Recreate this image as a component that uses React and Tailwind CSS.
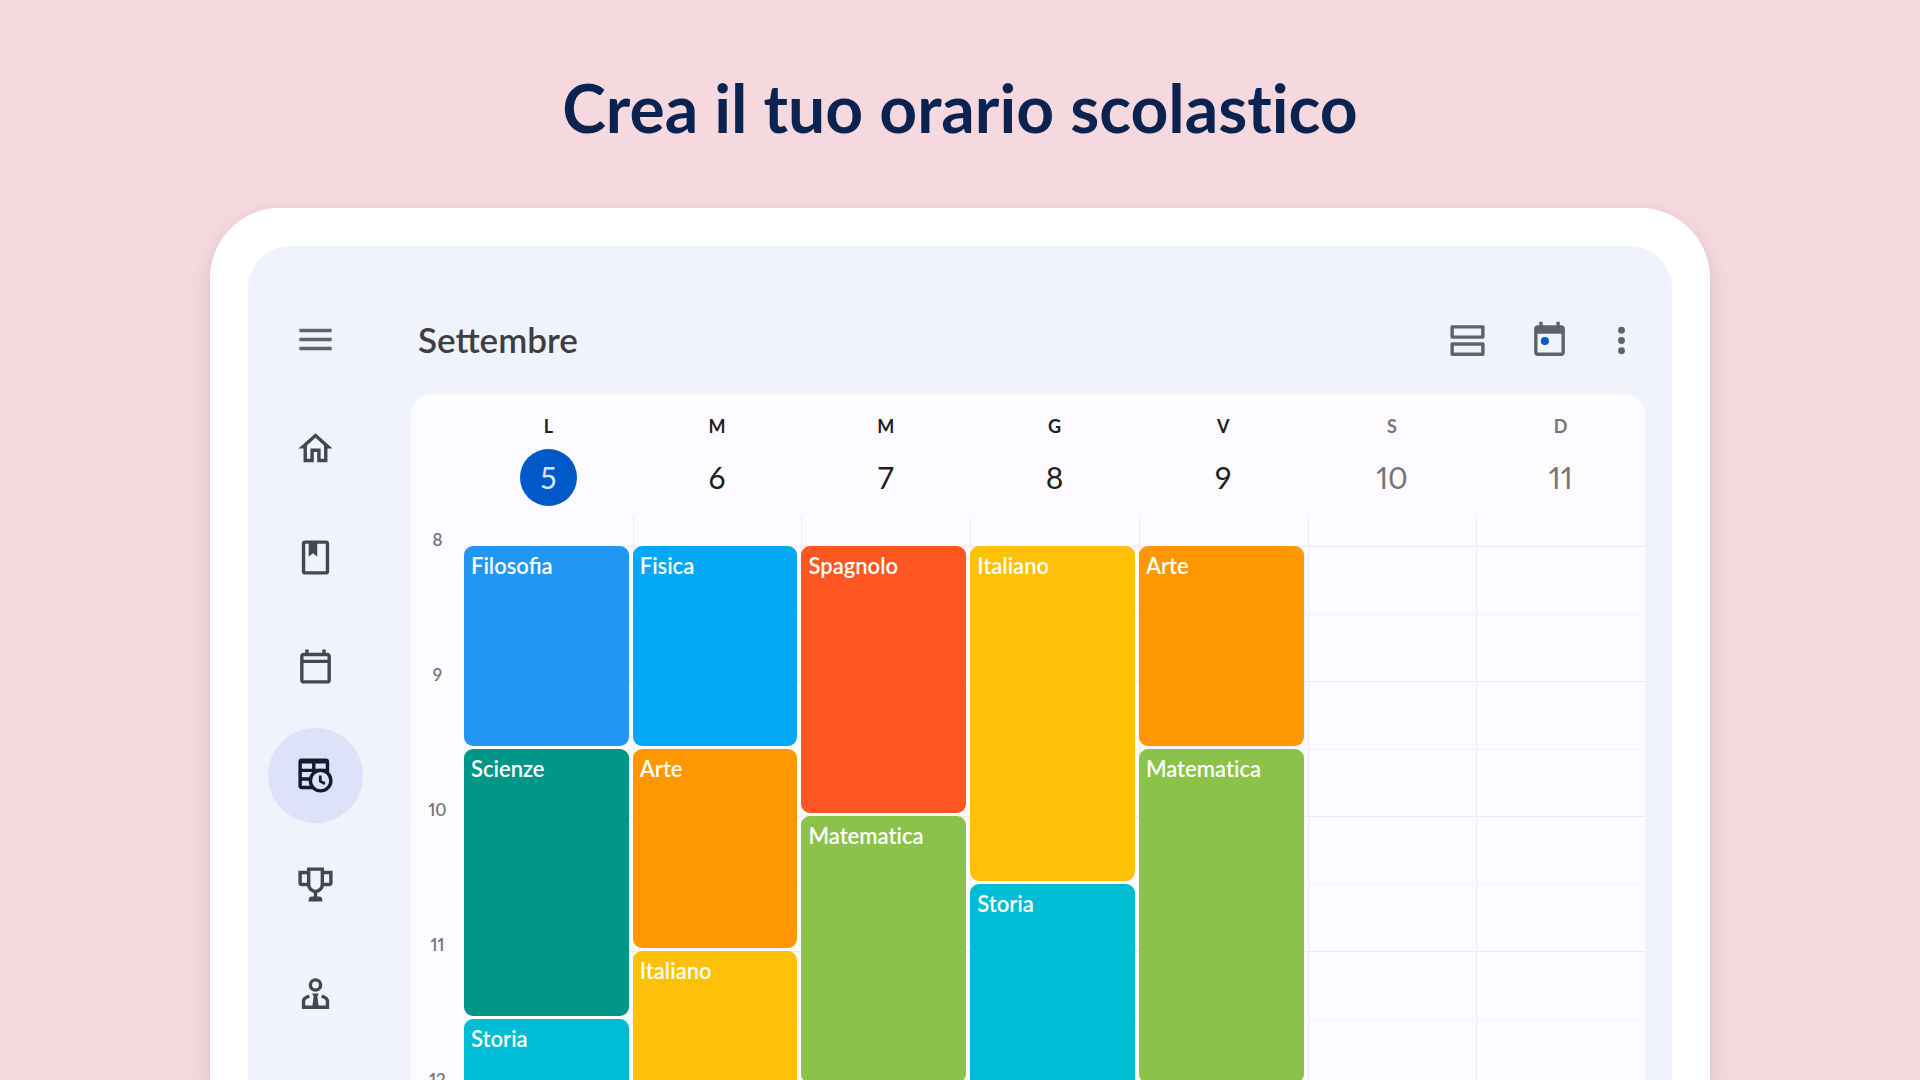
import clsx from "clsx";

const DAYS = [
  {
    letter: "L",
    number: 5,
    name: "Lunedì",
    today: true,
    lessons: [
      { subject: "Filosofia", start: 8, end: 9.5, color: "bg-[#2196f3]" },
      { subject: "Scienze", start: 9.5, end: 11.5, color: "bg-[#009688]" },
      { subject: "Storia", start: 11.5, end: 13, color: "bg-[#00bcd4]" },
    ],
  },
  {
    letter: "M",
    number: 6,
    name: "Martedì",
    lessons: [
      { subject: "Fisica", start: 8, end: 9.5, color: "bg-[#03a9f4]" },
      { subject: "Arte", start: 9.5, end: 11, color: "bg-[#ff9800]" },
      { subject: "Italiano", start: 11, end: 13, color: "bg-[#ffc107]" },
    ],
  },
  {
    letter: "M",
    number: 7,
    name: "Mercoledì",
    lessons: [
      { subject: "Spagnolo", start: 8, end: 10, color: "bg-[#ff5722]" },
      { subject: "Matematica", start: 10, end: 12, color: "bg-[#8bc34a]" },
    ],
  },
  {
    letter: "G",
    number: 8,
    name: "Giovedì",
    lessons: [
      { subject: "Italiano", start: 8, end: 10.5, color: "bg-[#ffc107]" },
      { subject: "Storia", start: 10.5, end: 13, color: "bg-[#00bcd4]" },
    ],
  },
  {
    letter: "V",
    number: 9,
    name: "Venerdì",
    lessons: [
      { subject: "Arte", start: 8, end: 9.5, color: "bg-[#ff9800]" },
      { subject: "Matematica", start: 9.5, end: 12, color: "bg-[#8bc34a]" },
    ],
  },
  { letter: "S", number: 10, name: "Sabato", weekend: true, lessons: [] },
  { letter: "D", number: 11, name: "Domenica", weekend: true, lessons: [] },
];

const FIRST_HOUR = 8;
const HOURS = [8, 9, 10, 11, 12];

// Row 1 of the day grid is the strip above the first hour, then two rows per hour
const rowOf = (hour) => (hour - FIRST_HOUR) * 2 + 2;

function Icon({ className = "size-[41px]", children }) {
  return (
    <svg viewBox="0 0 24 24" fill="currentColor" aria-hidden="true" className={className}>
      {children}
    </svg>
  );
}

function MenuIcon() {
  return (
    <Icon className="size-[43px]">
      <path d="M3 18h18v-2H3v2zm0-5h18v-2H3v2zm0-7v2h18V6H3z" />
    </Icon>
  );
}

function HomeIcon() {
  return (
    <Icon>
      <path d="M12 5.69l5 4.5V18h-2v-6H9v6H7v-7.81l5-4.5M12 3L2 12h3v8h6v-6h2v6h6v-8h3L12 3z" />
    </Icon>
  );
}

function BookIcon() {
  return (
    <Icon>
      <rect x="5" y="3" width="14" height="18" rx="1" fill="none" stroke="currentColor" strokeWidth="2" />
      <path d="M8 3h5v8.6l-2.5-2.1L8 11.6z" />
    </Icon>
  );
}

function CalendarIcon() {
  return (
    <Icon>
      <path d="M19 4h-1V2h-2v2H8V2H6v2H5c-1.1 0-2 .9-2 2v14c0 1.1.9 2 2 2h14c1.1 0 2-.9 2-2V6c0-1.1-.9-2-2-2zm0 16H5V10h14v10zm0-12H5V6h14v2z" />
    </Icon>
  );
}

function TimetableIcon() {
  return (
    <Icon>
      <path
        fillRule="evenodd"
        d="M4 2h14a2 2 0 0 1 2 2v14a2 2 0 0 1-2 2H4a2 2 0 0 1-2-2V4a2 2 0 0 1 2-2zM4 5v3h6V5zM12 5v3h6V5zM4 10v3h6v-3zM12 10v3h6v-3zM4 15v3h6v-3zM12 15v3h6v-3z"
      />
      <circle cx="15" cy="15" r="6" fill="#dde1f9" stroke="currentColor" strokeWidth="2" />
      <path d="M14.8 12v3.3l2.7 1.5" fill="none" stroke="currentColor" strokeWidth="1.6" />
    </Icon>
  );
}

function TrophyIcon() {
  return (
    <Icon>
      <path
        d="M8 3h8v9a4 4 0 0 1-8 0zM8 5H3v6a1 1 0 0 0 1 1h4M16 5h5v6a1 1 0 0 1-1 1h-4"
        fill="none"
        stroke="currentColor"
        strokeWidth="2"
      />
      <path d="M11 16h2v3h1a2 2 0 0 1 2 2v1H8v-1a2 2 0 0 1 2-2h1z" />
    </Icon>
  );
}

function TeacherIcon() {
  return (
    <Icon>
      <path
        d="M8.4 13.6C6.2 14.3 5 15.3 5 16.4V20h14v-3.6c0-1.1-1.2-2.1-3.4-2.8"
        fill="none"
        stroke="currentColor"
        strokeWidth="2"
      />
      <circle cx="12" cy="7" r="3" fill="none" stroke="currentColor" strokeWidth="2" />
      <path d="M10.1 12h3.8l-.8 1.8.8 6.2h-3.8l.8-6.2z" />
    </Icon>
  );
}

function AgendaIcon() {
  return (
    <Icon>
      <path
        d="M3 4h18v6H3zM3 14h18v6H3z"
        fill="none"
        stroke="currentColor"
        strokeWidth="2"
        strokeLinejoin="round"
      />
    </Icon>
  );
}

function TodayIcon() {
  return (
    <Icon>
      <path d="M19 3h-1V1h-2v2H8V1H6v2H5c-1.1 0-2 .9-2 2v14c0 1.1.9 2 2 2h14c1.1 0 2-.9 2-2V5c0-1.1-.9-2-2-2zm0 16H5V8h14v11z" />
      <circle cx="9.3" cy="12.3" r="2.4" fill="#0059c9" />
    </Icon>
  );
}

function MoreIcon() {
  return (
    <Icon>
      <circle cx="12" cy="6" r="2" />
      <circle cx="12" cy="12" r="2" />
      <circle cx="12" cy="18" r="2" />
    </Icon>
  );
}

const NAV = [
  { label: "Home", icon: HomeIcon },
  { label: "Materie", icon: BookIcon },
  { label: "Calendario", icon: CalendarIcon },
  { label: "Orario", icon: TimetableIcon, active: true },
  { label: "Voti", icon: TrophyIcon },
  { label: "Insegnanti", icon: TeacherIcon },
];

function Sidebar() {
  return (
    <nav className="flex shrink-0 flex-col gap-3.5 pt-[46px] pr-12 pl-5 text-[#44474f]">
      <button
        type="button"
        aria-label="Menu"
        className="flex size-[95px] items-center justify-center rounded-full text-[#5f6368]"
      >
        <MenuIcon />
      </button>
      {NAV.map(({ label, icon: NavIcon, active }) => (
        <a
          key={label}
          href="#"
          aria-label={label}
          aria-current={active ? "page" : undefined}
          className={clsx(
            "flex size-[95px] items-center justify-center rounded-full",
            active && "bg-[#dde1f9] text-[#131b2c]"
          )}
        >
          <NavIcon />
        </a>
      ))}
    </nav>
  );
}

function TopBar() {
  return (
    <header className="flex h-[148px] shrink-0 items-center justify-between pt-10 pr-[3px] pl-[7px]">
      <h2 className="pb-0.5 text-[35px] leading-10 font-semibold text-[#3c4043]">Settembre</h2>
      <div className="flex items-center text-[#5f6368]">
        <button type="button" aria-label="Agenda" className="mr-[41px]">
          <AgendaIcon />
        </button>
        <button type="button" aria-label="Oggi" className="mr-[31px]">
          <TodayIcon />
        </button>
        <button type="button" aria-label="Altro">
          <MoreIcon />
        </button>
      </div>
    </header>
  );
}

function DayHeader({ day }) {
  return (
    <div
      className={clsx(
        "flex flex-1 flex-col items-center pt-5 pb-[11px]",
        day.weekend ? "text-[#757575]" : "text-[#1f1f1f]"
      )}
    >
      <span className="text-lg leading-6 font-bold">{day.letter}</span>
      <span
        className={clsx(
          "mt-[11px] flex size-[57px] items-center justify-center rounded-full pb-0.5 text-[30px] leading-8 proportional-nums",
          day.today && "bg-[#0059c9] text-[#dbe6fb]"
        )}
      >
        {day.number}
      </span>
    </div>
  );
}

function DayColumn({ day, first }) {
  return (
    <div
      role="group"
      aria-label={day.name}
      className="grid flex-1 grid-cols-1 grid-rows-[29px_repeat(5,68px_67px)]"
    >
      <div className={clsx("col-start-1 row-start-1", !first && "border-l border-[#ecebf1]")} />
      {HOURS.flatMap((hour) => [hour, hour + 0.5]).map((slot) => (
        <div
          key={slot}
          className={clsx(
            "col-start-1 border-t",
            !first && "border-l border-l-[#ecebf1]",
            slot % 1 ? "border-t-[#f5f3f9]" : "border-t-[#ebe9f0]"
          )}
          style={{ gridRow: rowOf(slot) }}
        />
      ))}
      {day.lessons.map((lesson) => (
        <div
          key={lesson.start}
          className={clsx(
            "col-start-1 mr-1 mb-[3px] rounded-[9px] px-[7px] pt-2 text-[22px] leading-6 font-semibold text-white",
            lesson.color
          )}
          style={{ gridRow: `${rowOf(lesson.start)} / ${rowOf(lesson.end)}` }}
        >
          <span className={lesson.subject === "Filosofia" ? "" : "[font-variant-ligatures:none]"}>
            {lesson.subject}
          </span>
        </div>
      ))}
    </div>
  );
}

function WeekCard() {
  return (
    <section className="min-h-0 flex-1 overflow-hidden rounded-t-[20px] bg-[#fdfbff]">
      <div className="flex pl-[53px]">
        {DAYS.map((day) => (
          <DayHeader key={day.number} day={day} />
        ))}
      </div>
      <div className="flex">
        <div className="w-[53px] shrink-0 pt-[11px] text-center text-[17px] leading-6 font-semibold text-[#757575] proportional-nums">
          {HOURS.map((hour) => (
            <div key={hour} className="h-[135px]">
              {hour}
            </div>
          ))}
        </div>
        {DAYS.map((day, i) => (
          <DayColumn key={day.number} day={day} first={i === 0} />
        ))}
      </div>
    </section>
  );
}

export default function App() {
  return (
    <main className="flex h-screen flex-col overflow-hidden bg-[#f5d9de] font-['Lato',sans-serif]">
      <h1 className="pt-17 pb-15 text-center text-[66px] leading-[80px] font-bold text-[#0b2351] [font-variant-ligatures:none]">
        Crea il tuo orario scolastico
      </h1>
      <div className="mx-[210px] flex min-h-0 flex-1 rounded-t-[70px] bg-white px-[38px] pt-[38px] shadow-[0_8px_20px_rgba(60,20,60,0.14)]">
        <div className="flex min-w-0 flex-1 overflow-hidden rounded-t-[42px] bg-[#f0f3fc]">
          <Sidebar />
          <div className="flex min-w-0 flex-1 flex-col pr-[27px]">
            <TopBar />
            <WeekCard />
          </div>
        </div>
      </div>
    </main>
  );
}
